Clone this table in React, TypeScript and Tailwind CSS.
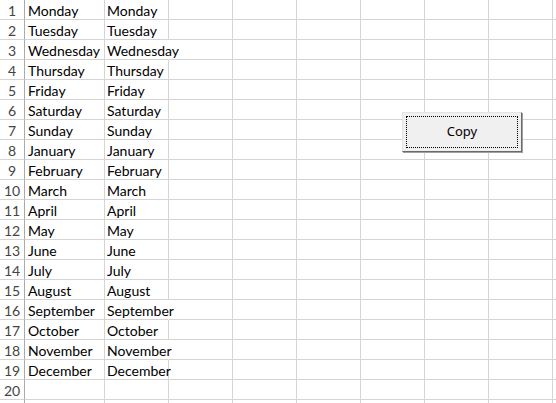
import React from "react";

const values = [
  "Monday",
  "Tuesday",
  "Wednesday",
  "Thursday",
  "Friday",
  "Saturday",
  "Sunday",
  "January",
  "February",
  "March",
  "April",
  "May",
  "June",
  "July",
  "August",
  "September",
  "October",
  "November",
  "December",
];

// rows whose column B text spills over into column C (gridline hidden)
const spillB = new Set(["Wednesday", "September", "November"]);

const extraCols = [0, 1, 2, 3, 4, 5, 6];

function Row({ n, value }: { n?: number; value?: string }) {
  const spill = value ? spillB.has(value) : false;
  return (
    <div className="flex h-5 shrink-0">
      <div className="w-[25px] shrink-0 border-r border-b border-[#ababab] border-b-[#d4d4d4] text-center text-[#444] leading-[21px]">
        {n}
      </div>
      <div className="w-[80px] shrink-0 border-r border-b border-[#d4d4d4] pl-[3px] whitespace-nowrap leading-[21px]">
        {value}
      </div>
      <div
        className={
          spill
            ? "w-[64px] shrink-0 border-r border-b border-[#d4d4d4] border-r-transparent pl-[2px] whitespace-nowrap leading-[21px] relative z-10"
            : "w-[64px] shrink-0 border-r border-b border-[#d4d4d4] pl-[2px] whitespace-nowrap leading-[21px]"
        }
      >
        {value}
      </div>
      {extraCols.map((c) => (
        <div key={c} className="w-[64px] shrink-0 border-r border-b border-[#d4d4d4]" />
      ))}
    </div>
  );
}

export default function App() {
  return (
    <div
      className="relative w-[556px] h-[403px] overflow-hidden bg-white text-black text-[14px]"
      style={{ fontFamily: "Lato, 'Liberation Sans', sans-serif" }}
    >
      <div className="flex flex-col">
        {values.map((v, i) => (
          <Row key={i} n={i + 1} value={v} />
        ))}
        <Row n={20} />
        <Row />
      </div>

      <button
        className="absolute left-[402px] top-[112px] w-[120px] h-[40px] bg-[#f0f0f0] border border-t-[#e3e3e3] border-l-[#e3e3e3] border-r-[#696969] border-b-[#696969] shadow-[1px_1px_0_#a0a0a0] p-[3px] text-[13px] text-black"
        style={{ fontFamily: "'Noto Sans', 'Liberation Sans', sans-serif" }}
      >
        <div className="w-full h-full border border-dotted border-black flex items-center justify-center">
          Copy
        </div>
      </button>
    </div>
  );
}
